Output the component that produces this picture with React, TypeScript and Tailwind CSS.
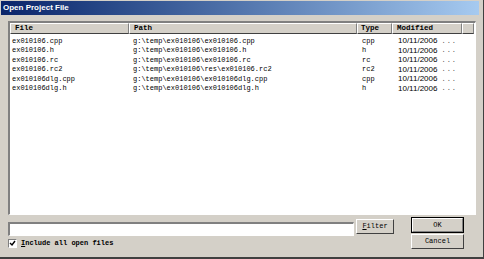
import React from 'react';

const rows = [
  { file: 'ex010106.cpp', path: 'g:\\temp\\ex010106\\ex010106.cpp', type: 'cpp' },
  { file: 'ex010106.h', path: 'g:\\temp\\ex010106\\ex010106.h', type: 'h' },
  { file: 'ex010106.rc', path: 'g:\\temp\\ex010106\\ex010106.rc', type: 'rc' },
  { file: 'ex010106.rc2', path: 'g:\\temp\\ex010106\\res\\ex010106.rc2', type: 'rc2' },
  { file: 'ex010106dlg.cpp', path: 'g:\\temp\\ex010106\\ex010106dlg.cpp', type: 'cpp' },
  { file: 'ex010106dlg.h', path: 'g:\\temp\\ex010106\\ex010106dlg.h', type: 'h' },
];

const mono = { fontFamily: '"Liberation Mono", monospace' };

const HeaderCell = ({ label, pad }: { label: string; pad: string }) => (
  <div
    className={`h-[11px] flex items-center ${pad} bg-[#d4d0c8] border-t border-l border-t-white border-l-white border-b border-r border-b-[#404040] border-r-[#808080] text-[7.5px] font-bold text-black overflow-hidden whitespace-nowrap`}
  >
    {label}
  </div>
);

const App = () => {
  return (
    <div className="w-[484px] h-[259px] bg-[#d4d0c8] pl-[1px] pr-[4px] pt-[1px] border-b-2 border-r border-b-[#404040] border-r-[#404040] overflow-hidden" style={mono}>
      {/* title bar */}
      <div className="h-[14px] bg-gradient-to-r from-[#0a246a] to-[#a6caf0] flex items-center pl-[2px]">
        <span className="text-white font-bold text-[8px]" style={{ fontFamily: '"Liberation Sans", Arial, sans-serif' }}>
          Open Project File
        </span>
      </div>

      <div className="pl-[7px] pt-[6px]">
        {/* list */}
        <div className="w-[468px] h-[194px] bg-white border-t-2 border-l-2 border-t-[#808080] border-l-[#808080] border-b border-r border-b-white border-r-white">
          <div className="grid grid-cols-[119px_228px_35px_70px_12px]">
            <HeaderCell label="File" pad="pl-[4px]" />
            <HeaderCell label="Path" pad="pl-[4px]" />
            <HeaderCell label="Type" pad="pl-[3px]" />
            <HeaderCell label="Modified" pad="pl-[4px]" />
            <HeaderCell label="" pad="" />
          </div>
          <div className="pt-[1px]">
            {rows.map((r) => (
              <div key={r.file} className="grid grid-cols-[119px_228px_35px_70px_12px] h-[9.5px] items-center text-[7px] text-black whitespace-nowrap">
                <div className="pl-[2px]">{r.file}</div>
                <div className="pl-[4px]">{r.path}</div>
                <div className="pl-[5px]">{r.type}</div>
                <div className="pl-[6px] flex items-center">
                  <span className="text-[8px]" style={{ fontFamily: '"Liberation Sans", Arial, sans-serif' }}>10/11/2006</span>
                  <span className="ml-[4px] text-[#555] tracking-[1px]">...</span>
                </div>
                <div />
              </div>
            ))}
          </div>
        </div>

        {/* bottom controls */}
        <div className="flex mt-[2px]">
          <div className="flex flex-col w-[386px] pt-[2px]">
            <div className="flex items-start gap-[2px]">
              <div className="mt-[3px] w-[346px] h-[14px] bg-white border-t-2 border-l-2 border-t-[#808080] border-l-[#808080] border-b border-r border-b-white border-r-white" />
              <button className="w-[38px] h-[15px] bg-[#d4d0c8] border-t border-l border-t-white border-l-white border-b border-r border-b-[#404040] border-r-[#404040] text-[7px] text-black flex items-center justify-center leading-none" style={mono}>
                <span><span className="underline">F</span>ilter</span>
              </button>
            </div>
            <div className="flex items-center mt-[3px] h-[9px]">
              <div className="w-[9px] h-[9px] bg-white border-t border-l border-t-[#808080] border-l-[#808080] border-b border-r border-b-white border-r-white flex items-center justify-center">
                <svg width="7" height="7" viewBox="0 0 7 7">
                  <path d="M1 3 L3 5 L6 1" stroke="black" strokeWidth="1.4" fill="none" />
                </svg>
              </div>
              <span className="ml-[4px] text-[7px] font-bold text-black whitespace-nowrap">
                <span className="underline">I</span>nclude all open files
              </span>
            </div>
          </div>
          <div className="flex flex-col ml-[17px]">
            <button className="w-[53px] h-[16px] bg-[#d4d0c8] border border-black text-[7px] text-black flex items-center justify-center leading-none" style={mono}>
              <span className="w-[51px] h-[14px] flex items-center justify-center border-t border-l border-t-white border-l-white border-b border-r border-b-[#808080] border-r-[#808080]">OK</span>
            </button>
            <button className="mt-[1px] w-[53px] h-[15px] bg-[#d4d0c8] border-t border-l border-t-white border-l-white border-b border-r border-b-[#404040] border-r-[#404040] text-[7px] text-black flex items-center justify-center leading-none" style={mono}>
              Cancel
            </button>
          </div>
        </div>
      </div>
    </div>
  );
};

export default App;
